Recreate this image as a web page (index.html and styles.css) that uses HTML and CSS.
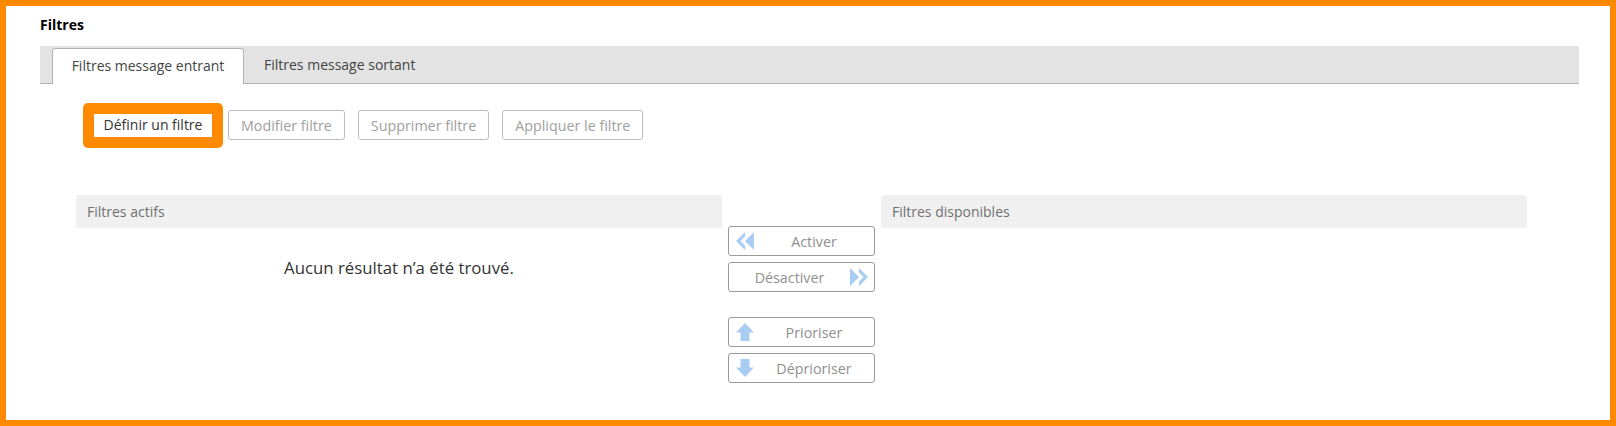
FILE: index.html
```html
<!doctype html>
<html lang="fr">
  <head>
    <meta charset="UTF-8" />
    <title>Filtres</title>
    <link rel="stylesheet" href="styles.css">
  </head>
  <body>
    <h1 class="page-title">Filtres</h1>

    <!-- Tabs -->
    <div class="tabs">
      <span class="tab active">Filtres message entrant</span>
      <span class="tab">Filtres message sortant</span>
    </div>

    <!-- Toolbar -->
    <div class="toolbar">
      <div class="highlight"><span class="define-button">Définir un filtre</span></div>
      <span class="button">Modifier filtre</span>
      <span class="button">Supprimer filtre</span>
      <span class="button">Appliquer le filtre</span>
    </div>

    <!-- Lists -->
    <div class="lists">
      <section class="list">
        <div class="list-header">Filtres actifs</div>
        <p class="empty">Aucun résultat n’a été trouvé.</p>
      </section>

      <div class="actions">
        <span class="button action">
          <svg class="icon" viewBox="0 0 18 18"><path d="M9 0 0 9l9 9v-4.5L4.5 9 9 4.5V0Zm9 0-9 9 9 9V0Z" /></svg>
          <span class="action-label">Activer</span>
        </span>
        <span class="button action action-right">
          <span class="action-label">Désactiver</span>
          <svg class="icon" viewBox="0 0 18 18"><path d="m0 0 9 9-9 9V0Zm9 0 9 9-9 9v-4.5L13.500 9 9 4.500V0Z" /></svg>
        </span>
        <span class="button action group-start">
          <svg class="icon" viewBox="0 0 18 18"><path d="M9 0 0 9.500h4.500V18h9V9.500H18L9 0Z" /></svg>
          <span class="action-label">Prioriser</span>
        </span>
        <span class="button action">
          <svg class="icon" viewBox="0 0 18 18"><path d="M4.500 0h9v8.500H18L9 18 0 8.500h4.500V0Z" /></svg>
          <span class="action-label">Déprioriser</span>
        </span>
      </div>

      <section class="list">
        <div class="list-header">Filtres disponibles</div>
      </section>
    </div>
  </body>
</html>
```

FILE: styles.css
```css
/* General Styling */
html,
body {
  height: 100%;
}

body {
  box-sizing: border-box;
  margin: 0;
  padding: 0 31px 0 34px;
  border: 6px solid #ff8a00;
  background-color: #fff;
  font-family: "Open Sans", Arial, sans-serif;
  font-size: 14px;
  color: #444;
  overflow: hidden;
}

.page-title {
  margin: 0;
  height: 40px;
  padding-top: 10px;
  box-sizing: border-box;
  font-size: 14px;
  line-height: 18px;
  font-weight: 700;
  color: #000;
}

/* Tabs */
.tabs {
  display: flex;
  height: 38px;
  box-sizing: border-box;
  padding: 2px 0 0 12px;
  background-color: #e3e3e3;
  border-bottom: 1px solid #b3b3b3;
}

.tab {
  height: 36px;
  padding: 0 20px;
  line-height: 34px;
  box-sizing: border-box;
}

.tab.active {
  width: 192px;
  padding: 0;
  text-align: center;
  background-color: #fff;
  border: 1px solid #b3b3b3;
  border-bottom: none;
  border-radius: 3px 3px 0 0;
}

/* Toolbar */
.toolbar {
  display: flex;
  align-items: center;
  height: 45px;
  margin: 19px 0 0 43px;
}

.highlight {
  box-sizing: border-box;
  width: 140px;
  height: 45px;
  padding: 11px;
  margin-right: 5px;
  background-color: #ff8a00;
  border-radius: 5px;
}

.define-button {
  display: block;
  height: 23px;
  line-height: 22px;
  text-align: center;
  background-color: #fff;
  color: #333;
}

.button {
  box-sizing: border-box;
  display: inline-flex;
  align-items: center;
  height: 30px;
  padding: 0 12px;
  margin: 0 13px 1px 0;
  background-color: #fff;
  border: 1px solid #bdbdbd;
  border-radius: 3px;
  font-size: 14.300px;
  color: #a0a0a0;
}

/* Lists */
.lists {
  display: flex;
  margin: 47px 0 0 36px;
}

.list {
  width: 646px;
}

.list-header {
  height: 33px;
  padding-left: 11px;
  line-height: 33px;
  background-color: #f0f0f0;
  border-radius: 3px 3px 0 0;
  color: #707070;
}

.empty {
  margin: 29px 0 0;
  text-align: center;
  font-size: 16.800px;
  line-height: 22px;
  color: #333;
}

.actions {
  display: flex;
  flex-direction: column;
  gap: 6px;
  width: 147px;
  margin: 31px 6px 0;
}

.action {
  width: 147px;
  margin: 0;
  padding: 0 0 0 7px;
  border-color: #9a9a9a;
  color: #909090;
}

.action-right {
  padding: 0 6px 0 0;
}

.action-label {
  flex: 1;
  text-align: center;
}

.group-start {
  margin-top: 19px;
}

.icon {
  width: 18px;
  height: 18px;
  fill: #a9cdf2;
}
```
